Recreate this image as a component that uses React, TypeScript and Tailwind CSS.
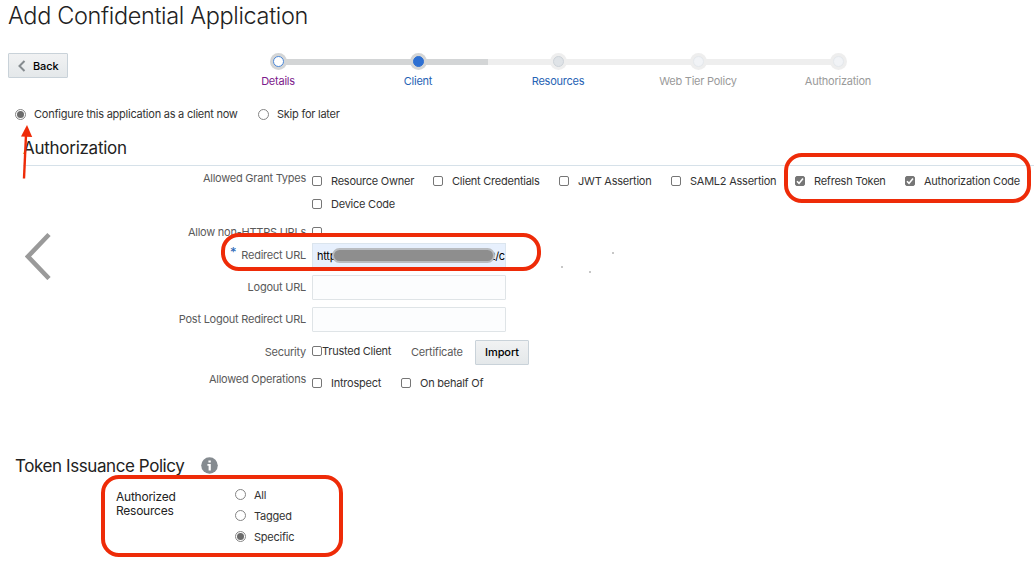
import clsx from 'clsx'
import React, { memo } from 'react'

type Step = {
  label: string
  state: 'visited' | 'current' | 'next' | 'disabled'
}

const steps: Step[] = [
  { label: 'Details', state: 'visited' },
  { label: 'Client', state: 'current' },
  { label: 'Resources', state: 'next' },
  { label: 'Web Tier Policy', state: 'disabled' },
  { label: 'Authorization', state: 'disabled' },
]

type MarkProps = { checked?: boolean; className?: string }

const Radio: React.FC<MarkProps> = ({ checked, className }) => (
  <span
    className={clsx(
      'flex size-[11px] shrink-0 items-center justify-center rounded-full border border-[#858585] bg-white',
      className
    )}
  >
    {checked && <span className="size-[7px] rounded-full bg-[#6b6b6b]" />}
  </span>
)

const Checkbox: React.FC<MarkProps> = ({ checked, className }) => (
  <span
    className={clsx(
      'flex size-[10px] shrink-0 items-center justify-center rounded-[2px] border border-[#767676]',
      checked ? 'bg-[#767676]' : 'bg-white',
      className
    )}
  >
    {checked && (
      <svg viewBox="0 0 10 10" className="size-[10px] shrink-0">
        <path
          d="M2 5.3 4 7.4 8 2.4"
          fill="none"
          stroke="#fff"
          strokeWidth="1.6"
        />
      </svg>
    )}
  </span>
)

const Option: React.FC<{
  label: string
  checked?: boolean
  className?: string
}> = ({ label, checked, className }) => (
  <label className={clsx('flex items-center whitespace-nowrap', className)}>
    <Checkbox checked={checked} />
    <span className="ml-[9px]">{label}</span>
  </label>
)

const FieldLabel: React.FC<{ children: React.ReactNode; className?: string }> = ({
  children,
  className,
}) => (
  <div
    className={clsx(
      'w-[306px] shrink-0 text-right whitespace-nowrap text-[#5a5a5a]',
      className
    )}
  >
    {children}
  </div>
)

const Stepper = () => (
  <div className="ml-[140px] flex">
    {steps.map(({ label, state }, i) => (
      <div key={label} className="flex w-[140px] flex-col items-center">
        <div className="flex w-full items-center">
          <div
            className={clsx(
              'h-[6px] flex-1',
              i === 0 && 'bg-transparent',
              i === 1 && 'bg-[#d3d5d6]',
              i > 1 && 'bg-[#eeeeee]'
            )}
          />
          <div
            className={clsx(
              '-mx-px flex size-[17px] items-center justify-center rounded-full',
              i < 2 ? 'bg-[#d3d5d6]' : 'bg-[#eeeeee]'
            )}
          >
            <div
              className={clsx(
                'size-[11px] rounded-full border',
                state === 'visited' && 'border-[#4a87d8] bg-white',
                state === 'current' && 'border-[#2d6fd2] bg-[#2d6fd2]',
                state === 'next' && 'border-[#cdd3d9] bg-[#dfe3e7]',
                state === 'disabled' && 'border-[#e4e8ec] bg-[#f1f3f6]'
              )}
            />
          </div>
          <div
            className={clsx(
              'h-[6px] flex-1',
              i === 0 && 'bg-[#d3d5d6]',
              i === 1 && 'bg-[#d3d5d6]',
              (i === 2 || i === 3) && 'bg-[#eeeeee]'
            )}
          />
        </div>
        <div
          className={clsx(
            'mt-[3px] leading-[16px]',
            state === 'visited' && 'text-[#7d1a8c]',
            (state === 'current' || state === 'next') && 'text-[#2663b4]',
            state === 'disabled' && 'text-[#9a9a9a]'
          )}
        >
          {label}
        </div>
      </div>
    ))}
  </div>
)

// red marker drawn over the form
const Highlight: React.FC<{ className: string }> = ({ className }) => (
  <div className={clsx('absolute border-4 border-[#ee2b08]', className)} />
)

const App = () => {
  return (
    <div className="relative h-[563px] w-[1034px] overflow-hidden bg-white font-['Inter','Liberation_Sans',sans-serif] text-[11px] leading-[16px] tracking-[-0.24px] text-[#333333]">
      <h1 className="h-[53px] pl-[8px] text-[23.5px] leading-[32px] font-light tracking-[-0.35px] text-[#222222]">
        Add Confidential Application
      </h1>

      <div className="flex h-[48px] items-start">
        <button className="ml-[8px] flex h-[25px] w-[60px] items-center rounded-[1px] border border-[#c9d2d9] bg-linear-to-b from-[#f1f2f3] to-[#e4e8ea] pl-[9px] font-medium tracking-[-0.1px] text-black">
          <svg viewBox="0 0 8 12" className="h-[12px] w-[8px]">
            <path
              d="M6.5 1 1.5 6l5 5"
              fill="none"
              stroke="#858b8f"
              strokeWidth="2"
            />
          </svg>
          <span className="ml-[7px]">Back</span>
        </button>
        <Stepper />
      </div>

      <div className="flex h-[26px] items-center pl-[15px]">
        <Radio checked />
        <span className="ml-[8px] w-[224px]">
          Configure this application as a client now
        </span>
        <Radio />
        <span className="ml-[8px]">Skip for later</span>
      </div>

      <h2 className="ml-[23px] flex h-[39px] items-center border-b border-[#d6e1e9] pt-[4px] text-[17px] tracking-[-0.27px] text-[#222222]">
        Authorization
      </h2>

      <div className="flex h-[55px]">
        <FieldLabel className="pt-[4px]">Allowed Grant Types</FieldLabel>
        <div className="ml-[6px]">
          <div className="flex h-[23px] items-center pt-[7px]">
            <Option label="Resource Owner" className="w-[121px]" />
            <Option label="Client Credentials" className="w-[126px]" />
            <Option label="JWT Assertion" className="w-[112px]" />
            <Option label="SAML2 Assertion" className="w-[124px]" />
            <Option label="Refresh Token" checked className="w-[110px]" />
            <Option label="Authorization Code" checked />
          </div>
          <div className="flex h-[30px] items-center">
            <Option label="Device Code" />
          </div>
        </div>
      </div>

      <div className="flex h-[22px] items-center">
        <FieldLabel>Allow non-HTTPS URLs</FieldLabel>
        <Checkbox className="mb-px ml-[6px]" />
      </div>

      <div className="flex h-[25px] items-center">
        <FieldLabel className="pb-[2px]">
          <span className="mr-[5px] inline-block -translate-y-[2px] text-[13px] leading-[10px] text-[#2663b4]">
            *
          </span>
          Redirect URL
        </FieldLabel>
        <div className="ml-[6px] flex h-[25px] w-[194px] items-center border border-[#dbe5ee] bg-[#e7f0fd] pl-[4px] text-black">
          <span className="w-[15px] shrink-0">http</span>
          <span className="z-10 h-[15px] w-[163px] shrink-0 rounded-full border-2 border-[#b9bcc0] bg-[#8e8e8e]" />
          <span className="-ml-[6px] shrink-0 tracking-[-0.4px]">2/c</span>
        </div>
      </div>

      <div className="mt-[7px] flex h-[25px] items-center">
        <FieldLabel className="pb-[2px]">Logout URL</FieldLabel>
        <div className="ml-[6px] h-[25px] w-[194px] rounded-[1px] border border-[#dfe4e7] bg-[#fcfdfe]" />
      </div>

      <div className="mt-[7px] flex h-[25px] items-center">
        <FieldLabel className="pb-px">Post Logout Redirect URL</FieldLabel>
        <div className="ml-[6px] h-[25px] w-[194px] rounded-[1px] border border-[#dfe4e7] bg-[#fcfdfe]" />
      </div>

      <div className="mt-[7px] flex h-[26px] items-center">
        <FieldLabel>Security</FieldLabel>
        <Checkbox className="mb-[2px] ml-[6px]" />
        <span className="w-[89px] pb-[2px]">Trusted Client</span>
        <span className="w-[64px] text-[#5a5a5a]">Certificate</span>
        <button className="h-[25px] w-[54px] rounded-[1px] border border-[#c9d2d9] bg-linear-to-b from-[#f1f2f3] to-[#e4e8ea] font-medium tracking-[-0.1px] text-black">
          Import
        </button>
      </div>

      <div className="flex h-[89px]">
        <FieldLabel className="pt-[6px]">Allowed Operations</FieldLabel>
        <div className="ml-[6px] flex h-[18px] items-center pt-[17px]">
          <Option label="Introspect" className="w-[89px]" />
          <Option label="On behalf Of" />
        </div>
      </div>

      <div className="flex h-[24px] items-center pl-[15px]">
        <h2 className="w-[186px] text-[17px] tracking-[-0.42px] whitespace-nowrap text-[#222222]">
          Token Issuance Policy
        </h2>
        <svg viewBox="0 0 17 17" className="mb-[2px] size-[17px]">
          <circle cx="8.5" cy="8.5" r="8.3" fill="#858b90" />
          <path
            d="M7.4 3.4h2.4v2.2H7.4zM6.4 7h3.4v6.4H7.6V8.7H6.4z"
            fill="#fff"
          />
        </svg>
      </div>

      <div className="flex pt-[6px]">
        <div className="ml-[116px] w-[119px] pt-[6px] text-[12px] leading-[14px] text-[#222222]">
          Authorized
          <br />
          Resources
        </div>
        <div className="flex flex-col">
          {['All', 'Tagged', 'Specific'].map((label) => (
            <label key={label} className="flex h-[21px] items-center">
              <Radio checked={label === 'Specific'} />
              <span className="ml-[8px] pt-px">{label}</span>
            </label>
          ))}
        </div>
      </div>

      <svg
        viewBox="0 0 26 48"
        className="absolute top-[232px] left-[25px] h-[48px] w-[26px]"
      >
        <path
          d="M24 2.5 3 24.5 24 46.5"
          fill="none"
          stroke="#9a9a9a"
          strokeWidth="4.6"
        />
      </svg>

      <span className="absolute top-[266px] left-[561px] size-[2px] rounded-full bg-[#b5b5b5]" />
      <span className="absolute top-[271px] left-[589px] size-[2px] rounded-full bg-[#b5b5b5]" />
      <span className="absolute top-[252px] left-[612px] size-[2px] rounded-full bg-[#b5b5b5]" />

      <Highlight className="top-[153px] left-[784px] h-[50px] w-[247px] rounded-[18px]" />
      <Highlight className="top-[233px] left-[221px] h-[38px] w-[320px] rounded-[18px]" />
      <Highlight className="top-[475px] left-[101px] h-[82px] w-[242px] rounded-[18px]" />

      <svg
        viewBox="0 0 14 54"
        className="absolute top-[125px] left-[19px] h-[54px] w-[14px]"
      >
        <path d="M5 53.5 7 10" stroke="#ee2b08" strokeWidth="2.4" />
        <path d="M8 0 13.2 12 2 11.5z" fill="#ee2b08" />
      </svg>
    </div>
  )
}

export default memo(App)
